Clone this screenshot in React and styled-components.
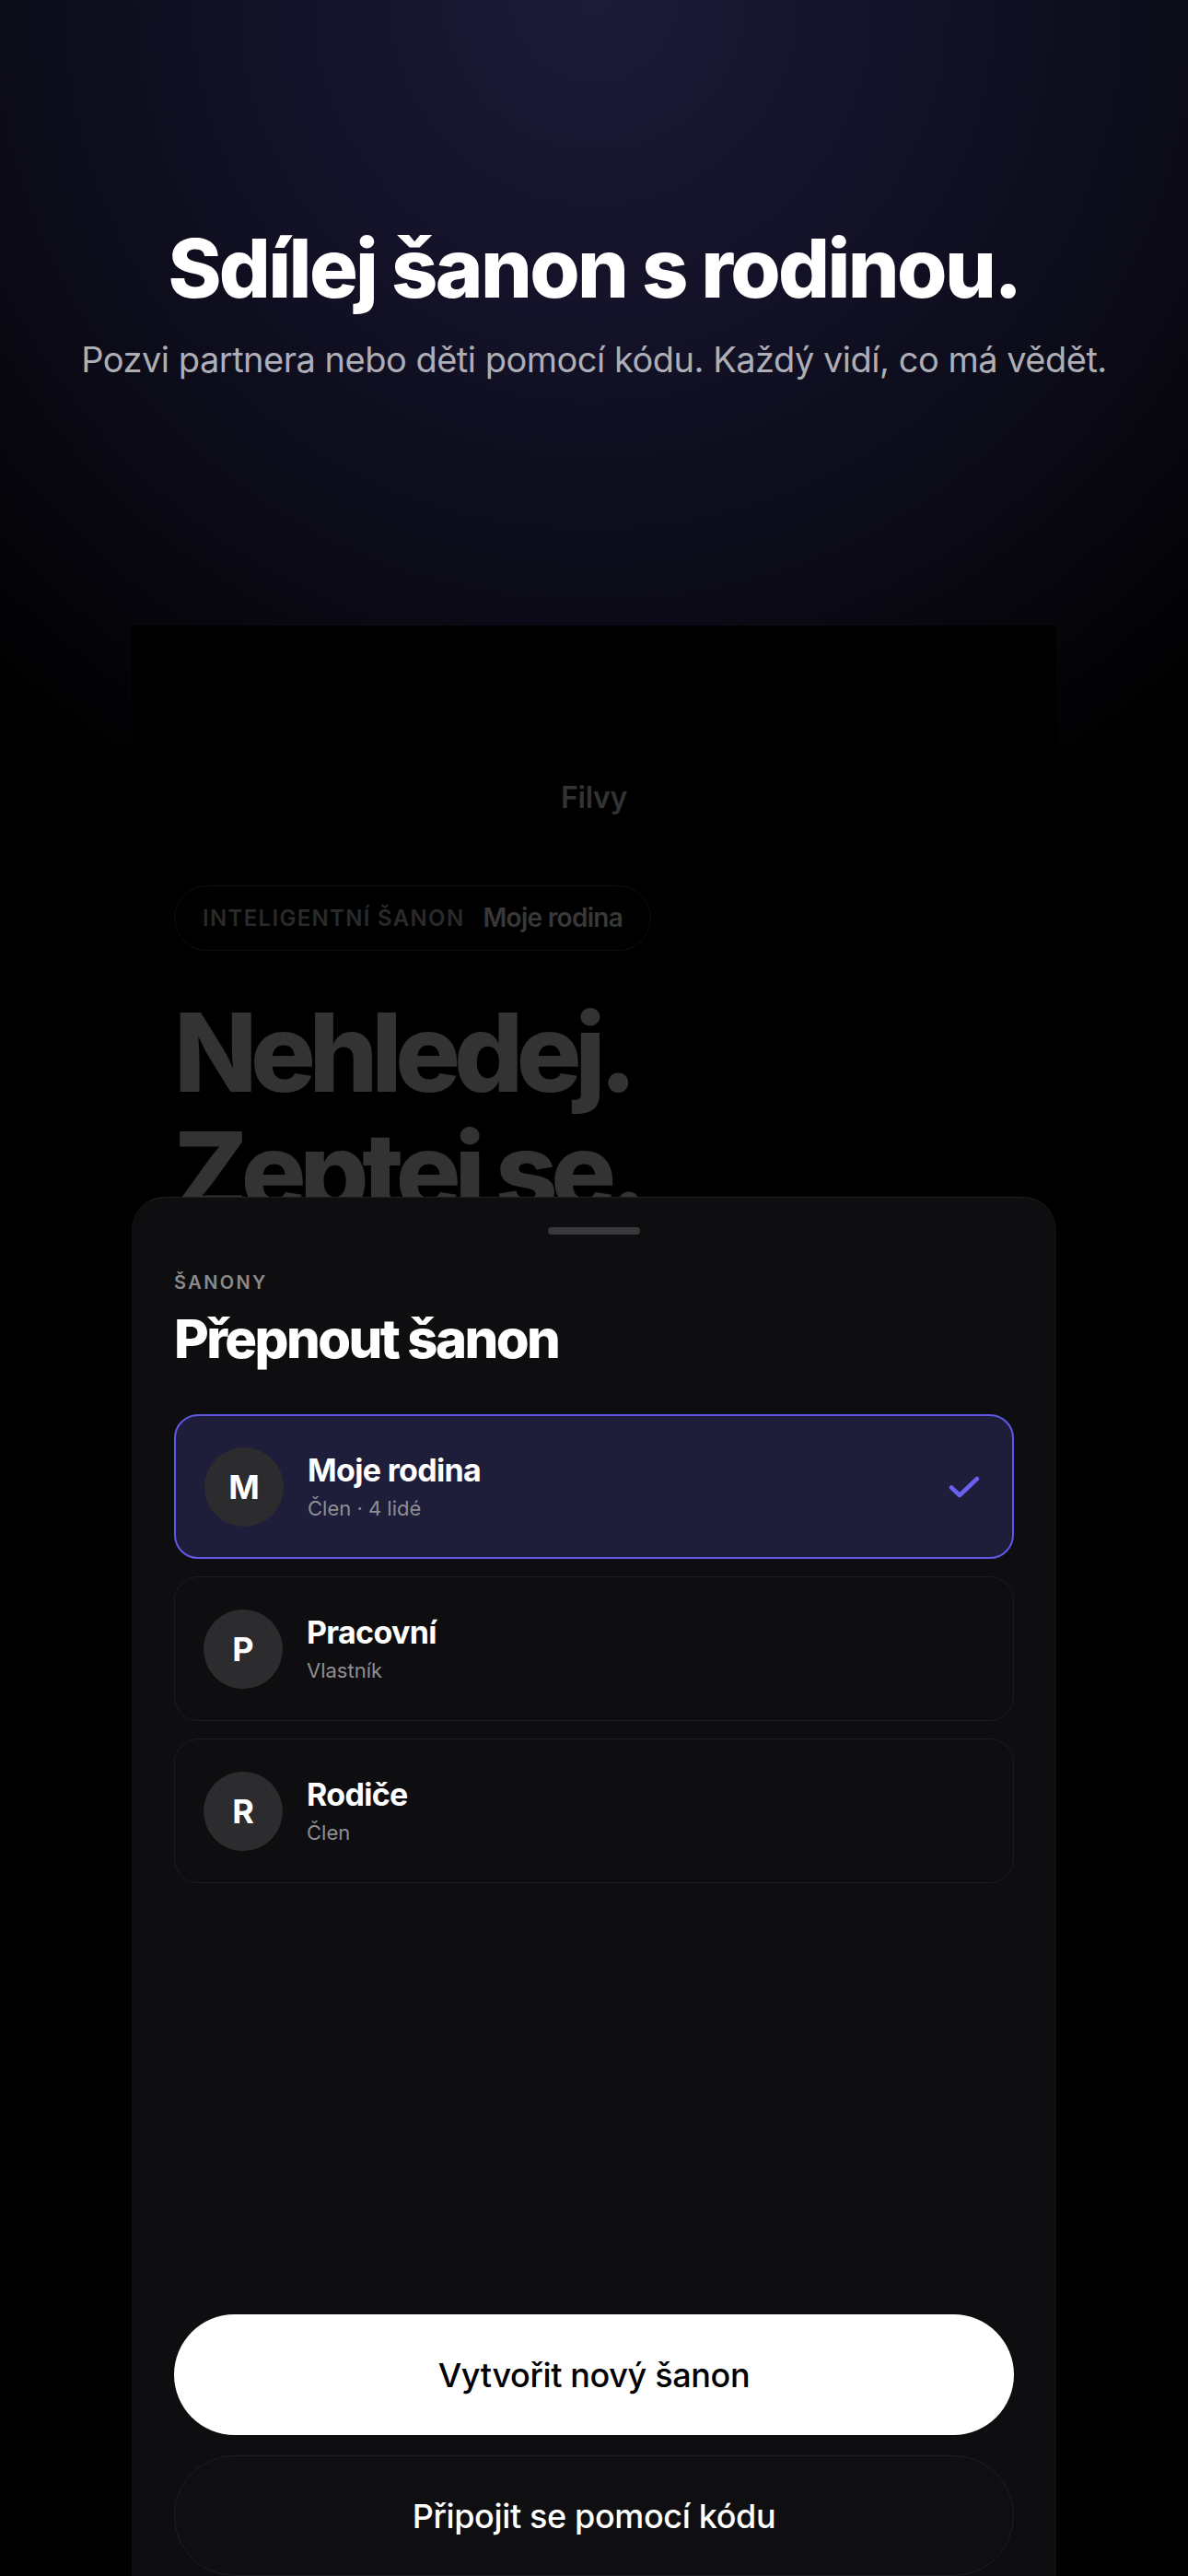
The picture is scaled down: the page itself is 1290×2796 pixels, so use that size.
import React from "react";
import styled, { createGlobalStyle } from "styled-components";

const GlobalStyle = createGlobalStyle`
  html, body { margin: 0; padding: 0; background: #000; }
  body {
    font-family: Inter, "Noto Sans", "Liberation Sans", sans-serif;
    -webkit-font-smoothing: antialiased;
  }
  * { box-sizing: border-box; }
`;

const Page = styled.div`
  width: 1290px;
  height: 2796px;
  overflow: hidden;
  display: flex;
  flex-direction: column;
  align-items: center;
  background: radial-gradient(
    ellipse 1000px 1000px at 50% 0%,
    #1c1a37 0%,
    #131228 35%,
    #0b0a16 68%,
    #000 100%
  );
`;

const Hero = styled.header`
  display: flex;
  flex-direction: column;
  align-items: center;
  padding-top: 244px;
  text-align: center;
`;

const Title = styled.h1`
  margin: 0;
  font-size: 88px;
  line-height: 1.08;
  font-weight: 800;
  letter-spacing: -0.03em;
  color: #fff;
`;

const Lead = styled.p`
  margin: 27px 0 0;
  font-size: 38px;
  line-height: 1.3;
  font-weight: 400;
  letter-spacing: -0.013em;
  color: #aeaeb6;
`;

const Phone = styled.div`
  position: relative;
  flex-shrink: 0;
  width: 1004px;
  height: 2165px;
  margin-top: 264px;
  background: #000;
  overflow: hidden;
`;

const Screen = styled.div`
  display: flex;
  flex-direction: column;
  padding: 168px 46px 0;
`;

const Brand = styled.div`
  align-self: center;
  font-size: 32px;
  line-height: 1.2;
  font-weight: 600;
  letter-spacing: -0.01em;
  color: #333;
`;

const ContextPill = styled.div`
  align-self: flex-start;
  margin-top: 75px;
  height: 71px;
  display: inline-flex;
  align-items: center;
  gap: 20px;
  padding: 0 30px;
  border: 1.5px solid #0e0e0e;
  border-radius: 36px;
`;

const PillLabel = styled.span`
  font-size: 24px;
  font-weight: 600;
  letter-spacing: 0.055em;
  color: #2a2a2a;
`;

const PillValue = styled.span`
  font-size: 28px;
  font-weight: 600;
  letter-spacing: -0.025em;
  color: #383838;
`;

const Headline = styled.h2`
  margin: 46px 0 0;
  font-size: 118px;
  line-height: 1.095;
  font-weight: 800;
  letter-spacing: -0.062em;
  color: #333;
`;

const Sheet = styled.section`
  position: absolute;
  top: 620px;
  left: 0;
  right: 0;
  bottom: 0;
  display: flex;
  flex-direction: column;
  padding: 32px 46px 48px;
  background: #0e0e10;
  border-radius: 36px 36px 0 0;
  border-top: 1px solid rgba(255, 255, 255, 0.07);
`;

const Grabber = styled.div`
  align-self: center;
  width: 100px;
  height: 8px;
  border-radius: 4px;
  background: #3a3a3c;
`;

const Eyebrow = styled.div`
  margin-top: 40px;
  font-size: 20px;
  line-height: 1.2;
  font-weight: 600;
  letter-spacing: 0.12em;
  color: #8a8a8e;
`;

const SheetTitle = styled.h3`
  margin: 16px 0 0;
  font-size: 58px;
  line-height: 1.15;
  font-weight: 800;
  letter-spacing: -0.045em;
  color: #fff;
`;

const List = styled.div`
  margin-top: 48px;
  display: flex;
  flex-direction: column;
  gap: 19px;
`;

const Item = styled.div`
  height: 157px;
  display: flex;
  align-items: center;
  gap: 26px;
  padding: 0 34px 0 31px;
  border-radius: 26px;
  border: ${(p) => (p.$active ? "2px solid #5f59e6" : "1.5px solid #1d1d21")};
  background: ${(p) => (p.$active ? "#1e1d3a" : "transparent")};
`;

const Avatar = styled.div`
  flex-shrink: 0;
  width: 86px;
  height: 86px;
  border-radius: 50%;
  background: #2c2c2e;
  display: flex;
  align-items: center;
  justify-content: center;
  font-size: 36px;
  font-weight: 700;
  color: #fff;
`;

const ItemText = styled.div`
  flex: 1;
  display: flex;
  flex-direction: column;
  gap: 6px;
`;

const ItemName = styled.div`
  font-size: 34px;
  line-height: 1.2;
  font-weight: 700;
  letter-spacing: -0.02em;
  color: #fff;
`;

const ItemMeta = styled.div`
  font-size: 22px;
  line-height: 1.3;
  font-weight: 400;
  color: #8e8e93;
`;

const Actions = styled.div`
  margin-top: auto;
  display: flex;
  flex-direction: column;
  gap: 22px;
`;

const Button = styled.button`
  height: 131px;
  width: 100%;
  border-radius: 66px;
  font-family: inherit;
  font-size: 36px;
  font-weight: 500;
  letter-spacing: -0.01em;
  cursor: pointer;
  border: ${(p) => (p.$primary ? "none" : "1.5px solid #1f1f23")};
  background: ${(p) => (p.$primary ? "#fff" : "#0f0f11")};
  color: ${(p) => (p.$primary ? "#000" : "#fff")};
`;

const CheckIcon = () => (
  <svg width="36" height="26" viewBox="0 0 36 26" fill="none">
    <path
      d="M4 13.5 L13 22 L32 4"
      stroke="#6b60f2"
      strokeWidth="4.6"
      strokeLinecap="round"
      strokeLinejoin="round"
    />
  </svg>
);

const binders = [
  { letter: "M", name: "Moje rodina", meta: "Člen · 4 lidé", active: true },
  { letter: "P", name: "Pracovní", meta: "Vlastník" },
  { letter: "R", name: "Rodiče", meta: "Člen" },
];

export default function App() {
  return (
    <>
      <GlobalStyle />
      <Page>
        <Hero>
          <Title>Sdílej šanon s rodinou.</Title>
          <Lead>Pozvi partnera nebo děti pomocí kódu. Každý vidí, co má vědět.</Lead>
        </Hero>
        <Phone>
          <Screen>
            <Brand>Filvy</Brand>
            <ContextPill>
              <PillLabel>INTELIGENTNÍ ŠANON</PillLabel>
              <PillValue>Moje rodina</PillValue>
            </ContextPill>
            <Headline>
              Nehledej.
              <br />
              Zeptej se.
            </Headline>
          </Screen>
          <Sheet>
            <Grabber />
            <Eyebrow>ŠANONY</Eyebrow>
            <SheetTitle>Přepnout šanon</SheetTitle>
            <List>
              {binders.map((b) => (
                <Item key={b.name} $active={b.active}>
                  <Avatar>{b.letter}</Avatar>
                  <ItemText>
                    <ItemName>{b.name}</ItemName>
                    <ItemMeta>{b.meta}</ItemMeta>
                  </ItemText>
                  {b.active && <CheckIcon />}
                </Item>
              ))}
            </List>
            <Actions>
              <Button $primary>Vytvořit nový šanon</Button>
              <Button>Připojit se pomocí kódu</Button>
            </Actions>
          </Sheet>
        </Phone>
      </Page>
    </>
  );
}
